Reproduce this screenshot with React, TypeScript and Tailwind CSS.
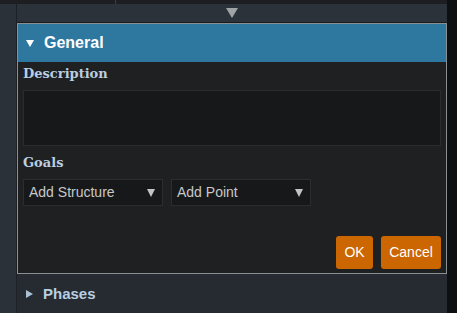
export default function App() {
  return (
    <div className="w-[457px] h-[313px] flex flex-col bg-[#0e0f10] overflow-hidden" style={{ fontFamily: '"Liberation Sans", Arial, sans-serif' }}>
      {/* top strip */}
      <div className="flex h-[4px] shrink-0">
        <div className="w-[115px] bg-[#1c1e21]" />
        <div className="w-[1px] bg-[#3a3d41]" />
        <div className="w-[331px] bg-[#1c1e21]" />
        <div className="flex-1 bg-[#0e0f10]" />
      </div>
      <div className="flex flex-1">
        <div className="w-[16px] bg-[#2b3138]" />
        <div className="w-[1px] bg-[#1d2125]" />
        <div className="w-[430px] flex flex-col bg-[#252b31]">
          <div className="h-[18px] bg-[#2c323a] flex items-center justify-center">
            <span className="w-0 h-0 border-l-[6px] border-r-[6px] border-t-[10px] border-l-transparent border-r-transparent border-t-[#a0a3a6]" />
          </div>
          <div className="h-[1px] bg-[#181a1c]" />
          <div className="h-[251px] border border-[#8a8f94] bg-[#1f2022] flex flex-col">
            <div className="h-[38px] bg-[#2e779f] flex items-center pl-[8px]">
              <span className="w-0 h-0 border-l-[4px] border-r-[4px] border-t-[7px] border-l-transparent border-r-transparent border-t-white" />
              <span className="ml-[10px] text-white font-bold text-[16px]">General</span>
            </div>
            <div className="px-[5px] flex flex-col flex-1">
              <div className="mt-[3px] h-[18px] text-[13px] font-bold text-[#b9cee0] leading-[18px]" style={{ fontFamily: '"DejaVu Serif", Georgia, serif' }}>Description</div>
              <div className="mt-[7px] h-[56px] bg-[#17181a] border border-[#2b2c2e]" />
              <div className="mt-[8px] h-[18px] text-[13px] font-bold text-[#b9cee0] leading-[18px]" style={{ fontFamily: '"DejaVu Serif", Georgia, serif' }}>Goals</div>
              <div className="mt-[7px] flex gap-[8px]">
                {['Add Structure', 'Add Point'].map((t) => (
                  <div key={t} className="w-[140px] h-[27px] bg-[#17181a] border border-[#2c2d2f] flex items-center justify-between pl-[5px] pr-[7px]">
                    <span className="text-[14px] text-[#c8c8c8]">{t}</span>
                    <span className="w-0 h-0 border-l-[4px] border-r-[4px] border-t-[8px] border-l-transparent border-r-transparent border-t-[#c4c4c4]" />
                  </div>
                ))}
              </div>
              <div className="mt-auto mb-[4px] flex justify-end gap-[8px]">
                <button className="w-[37px] h-[33px] bg-[#cc6600] rounded-[3px] text-white text-[14px]">OK</button>
                <button className="w-[60px] h-[33px] bg-[#cc6600] rounded-[3px] text-white text-[14px]">Cancel</button>
              </div>
            </div>
          </div>
          <div className="flex items-center h-[40px] pl-[9px]">
            <span className="w-0 h-0 border-t-[4px] border-b-[4px] border-l-[7px] border-t-transparent border-b-transparent border-l-[#a9c1d6]" />
            <span className="ml-[10px] font-bold text-[15px] text-[#b9cee0]">Phases</span>
          </div>
        </div>
        <div className="flex-1 bg-[#0e0f10]" />
      </div>
    </div>
  );
}
